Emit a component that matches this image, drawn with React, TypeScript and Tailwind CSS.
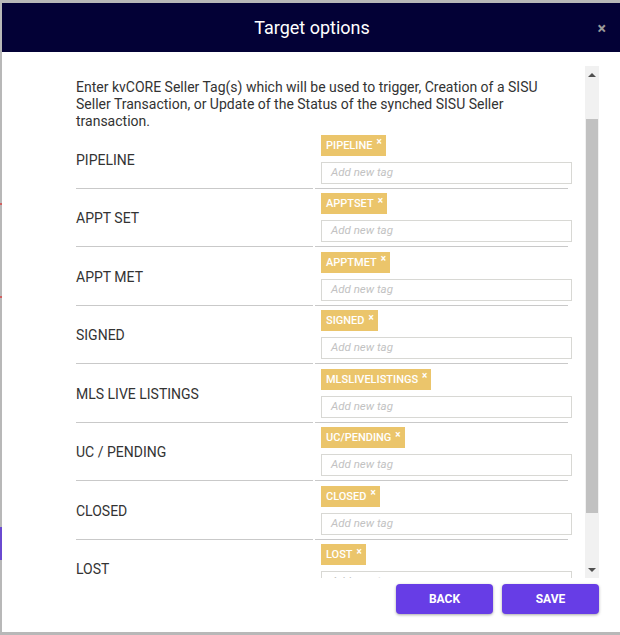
import React from "react";

const rows: [string, string][] = [
  ["PIPELINE", "PIPELINE"],
  ["APPT SET", "APPTSET"],
  ["APPT MET", "APPTMET"],
  ["SIGNED", "SIGNED"],
  ["MLS LIVE LISTINGS", "MLSLIVELISTINGS"],
  ["UC / PENDING", "UC/PENDING"],
  ["CLOSED", "CLOSED"],
  ["LOST", "LOST"],
];

function Row({ label, tag }: { label: string; tag: string }) {
  return (
    <div className="flex gap-[2px]">
      <div className="w-[237px] h-[58.5px] flex items-center pt-[3px] border-b border-[#c9c9c9] text-[14px] text-[#333]">
        {label}
      </div>
      <div className="w-[253px] h-[58.5px] border-b border-[#c9c9c9] pl-[6px] pt-[4.5px]">
        <div className="flex">
          <span className="h-[21px] bg-[#ebc56b] text-white text-[11px] font-medium flex items-center pl-[5px] pr-[4px] leading-none">
            {tag}
            <span className="text-[10px] font-bold ml-[4px] -mt-[6px]">×</span>
          </span>
        </div>
        <div className="mt-[6px] w-[251px] h-[22px] border border-[#d8d8d4] flex items-center pl-[9px] text-[11.5px] italic text-[#c2c2c2]">
          Add new tag
        </div>
      </div>
    </div>
  );
}

export default function App() {
  return (
    <div
      className="w-[620px] h-[635px] bg-[#b8b8b8] flex overflow-hidden"
      style={{ fontFamily: "Roboto, 'Liberation Sans', sans-serif" }}
    >
      <div className="w-[2px] flex flex-col shrink-0">
        <div className="h-[203px]" />
        <div className="h-[2px] bg-[#d06060]" />
        <div className="h-[91px]" />
        <div className="h-[2px] bg-[#d06060]" />
        <div className="h-[229px]" />
        <div className="h-[33px] bg-[#6a4ad0]" />
      </div>
      <div className="flex-1 flex flex-col pt-[3px]">
        <div className="bg-white h-[629px] flex flex-col">
          <div className="h-[49px] bg-[#030136] relative flex items-center justify-center shrink-0">
            <span className="text-white text-[18px] pl-[2px]">Target options</span>
            <span className="absolute right-[14px] top-[14px] text-[#9a9a9a] text-[16px] font-bold">×</span>
          </div>
          <div className="pt-[14px] flex h-[526px] shrink-0">
            <div className="flex-1 overflow-hidden pl-[74px] pt-[13px]">
              <div className="w-[496px]">
                <p className="text-[14px] leading-[17px] text-[#333]">
                  Enter kvCORE Seller Tag(s) which will be used to trigger, Creation of a SISU Seller Transaction, or Update of the Status of the synched SISU Seller transaction.
                </p>
                <div>
                  {rows.map(([l, t]) => (
                    <Row key={l} label={l} tag={t} />
                  ))}
                </div>
              </div>
            </div>
            <div className="w-[14px] mr-[21px] bg-[#f1f1f1] flex flex-col shrink-0">
              <div className="h-[17px] flex items-center justify-center">
                <div className="w-0 h-0 border-l-[4px] border-r-[4px] border-b-[4px] border-l-transparent border-r-transparent border-b-[#505050]" />
              </div>
              <div className="h-[36px]" />
              <div className="h-[394px] bg-[#c1c1c1] mx-[1px]" />
              <div className="flex-1" />
              <div className="h-[17px] flex items-center justify-center">
                <div className="w-0 h-0 border-l-[4px] border-r-[4px] border-t-[4px] border-l-transparent border-r-transparent border-t-[#505050]" />
              </div>
            </div>
          </div>
          <div className="flex justify-end gap-[9px] pt-[6px] pr-[21px]">
            <button className="w-[97px] h-[30px] rounded-[4px] bg-[#673de6] text-white text-[12px] font-bold shadow-[0_1px_3px_rgba(0,0,0,0.35)]">
              BACK
            </button>
            <button className="w-[97px] h-[30px] rounded-[4px] bg-[#673de6] text-white text-[12px] font-bold shadow-[0_1px_3px_rgba(0,0,0,0.35)]">
              SAVE
            </button>
          </div>
        </div>
      </div>
    </div>
  );
}
